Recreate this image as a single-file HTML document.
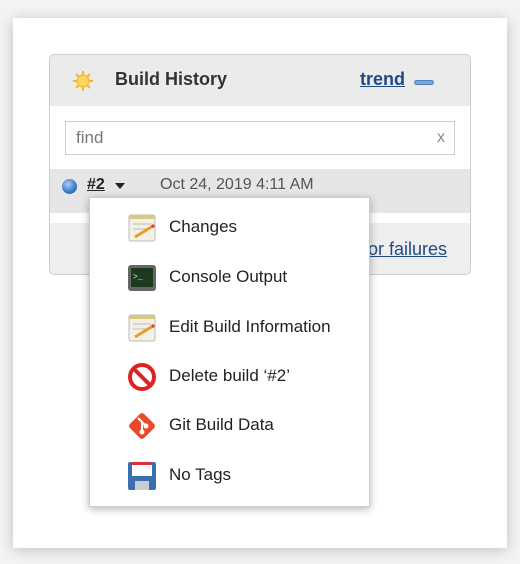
<!DOCTYPE html>
<html><head><style>
body{margin:0;width:520px;height:564px;background:#f4f4f4;font-family:"Liberation Sans",Arial,sans-serif;position:relative;overflow:hidden}
.page{position:absolute;left:13px;top:18px;width:494px;height:530px;background:#fff;box-shadow:0 2px 14px rgba(0,0,0,.22)}
.panel{position:absolute;left:49px;top:54px;width:420px;height:219px;border:1px solid #ccc;border-radius:5px;background:#eee;overflow:hidden}
.hdr{position:absolute;left:0;top:0;width:420px;height:51px;background:#ebebeb}
.white{position:absolute;left:0;top:51px;width:420px;height:63px;background:#fff}
.row{position:absolute;left:0;top:114px;width:420px;height:44px;background:#e6e6e6}
.gap{position:absolute;left:0;top:158px;width:420px;height:10px;background:#fff}
.t{position:absolute;white-space:nowrap}
.menu{position:absolute;left:89px;top:197px;width:279px;height:308px;background:#fff;border:1px solid #ccc;box-shadow:0 2px 8px rgba(0,0,0,.3)}
.mi{position:absolute;left:0;font-size:17px;color:#222}
.mi .ic{position:absolute;left:36px;top:-6px;width:32px;height:32px}
.mi span{position:absolute;left:79px;top:-1px;white-space:nowrap}
</style></head><body>
<div class="page"></div>
<div class="panel">
 <div class="hdr"></div><div class="white"></div><div class="row"></div><div class="gap"></div>
 <svg class="t" style="left:22px;top:15px" width="22" height="22" viewBox="0 0 22 22"><g stroke="#f5b629" stroke-width="2"><line x1="11" y1="1" x2="11" y2="21"/><line x1="1" y1="11" x2="21" y2="11"/><line x1="4" y1="4" x2="18" y2="18"/><line x1="18" y1="4" x2="4" y2="18"/></g><circle cx="11" cy="11" r="6" fill="#fbd85a" stroke="#f3b02a"/></svg>
 <div class="t" style="left:65px;top:14px;font-size:18px;font-weight:bold;color:#333">Build History</div>
 <div class="t" style="left:310px;top:14px;font-size:18px;font-weight:bold;color:#204a87;text-decoration:underline">trend</div>
 <div class="t" style="left:364px;top:25px;width:18px;height:3px;background:#7aa7d8;border:1px solid #4e7fc0;border-radius:3px"></div>
 <div class="t" style="left:15px;top:66px;width:388px;height:32px;border:1px solid #ccc;background:#fff"></div>
 <div class="t" style="left:26px;top:73px;font-size:17px;color:#777">find</div>
 <div class="t" style="left:387px;top:74px;font-size:16px;color:#888">x</div>
 <div class="t" style="left:12px;top:124px;width:15px;height:15px;border-radius:50%;background:radial-gradient(circle at 40% 35%,#a9cdf5,#3a78c8 60%,#1d4f94)"></div>
 <div class="t" style="left:37px;top:121px;font-size:16px;font-weight:bold;color:#222;text-decoration:underline">#2</div>
 <div class="t" style="left:65px;top:128px;width:0;height:0;border-left:5px solid transparent;border-right:5px solid transparent;border-top:6px solid #222"></div>
 <div class="t" style="left:110px;top:121px;font-size:16px;color:#555">Oct 24, 2019 4:11 AM</div>
 <div class="t" style="left:318px;top:184px;font-size:18px;color:#204a87;text-decoration:underline">or failures</div>
</div>
<div class="menu">
 <div class="mi" style="top:20px"><svg class="ic" viewBox="0 0 32 32"><rect x="3" y="3" width="26" height="26" rx="2" fill="#f4f1e4" stroke="#bbb"/><rect x="3" y="3" width="26" height="4" fill="#d8c982"/><g stroke="#bbb"><line x1="7" y1="12" x2="25" y2="12"/><line x1="7" y1="17" x2="22" y2="17"/></g><line x1="9" y1="25" x2="27" y2="14" stroke="#e0a030" stroke-width="3"/><circle cx="27" cy="14" r="1.6" fill="#e33"/></svg><span>Changes</span></div>
 <div class="mi" style="top:70px"><svg class="ic" viewBox="0 0 32 32"><rect x="2" y="3" width="28" height="26" rx="3" fill="#666"/><rect x="5" y="6" width="22" height="19" fill="#1e3a1e"/><text x="7" y="17" font-size="8" fill="#cfc" font-family="Liberation Mono">&gt;_</text></svg><span>Console Output</span></div>
 <div class="mi" style="top:120px"><svg class="ic" viewBox="0 0 32 32"><rect x="3" y="3" width="26" height="26" rx="2" fill="#f4f1e4" stroke="#bbb"/><rect x="3" y="3" width="26" height="4" fill="#d8c982"/><g stroke="#bbb"><line x1="7" y1="12" x2="25" y2="12"/><line x1="7" y1="17" x2="22" y2="17"/></g><line x1="9" y1="25" x2="27" y2="14" stroke="#e0a030" stroke-width="3"/><circle cx="27" cy="14" r="1.6" fill="#e33"/></svg><span>Edit Build Information</span></div>
 <div class="mi" style="top:169px"><svg class="ic" viewBox="0 0 32 32"><circle cx="16" cy="16" r="12" fill="#fff" stroke="#d22" stroke-width="4"/><line x1="8" y1="8" x2="24" y2="24" stroke="#d22" stroke-width="4"/></svg><span>Delete build ‘#2’</span></div>
 <div class="mi" style="top:218px"><svg class="ic" viewBox="0 0 32 32"><rect x="6" y="6" width="20" height="20" rx="3" fill="#e8492b" transform="rotate(45 16 16)"/><g stroke="#fff" stroke-width="2" fill="#fff"><line x1="12" y1="8" x2="20" y2="16"/><line x1="16" y1="12" x2="16" y2="22"/><circle cx="16" cy="22" r="1.5"/><circle cx="20" cy="16" r="1.5"/></g></svg><span>Git Build Data</span></div>
 <div class="mi" style="top:268px"><svg class="ic" viewBox="0 0 32 32"><rect x="2" y="2" width="28" height="28" rx="2" fill="#3a6fb0"/><rect x="6" y="2" width="20" height="14" fill="#fff"/><rect x="6" y="2" width="20" height="3" fill="#d33"/><rect x="9" y="21" width="14" height="9" fill="#ccc"/></svg><span>No Tags</span></div>
</div>
</body></html>
